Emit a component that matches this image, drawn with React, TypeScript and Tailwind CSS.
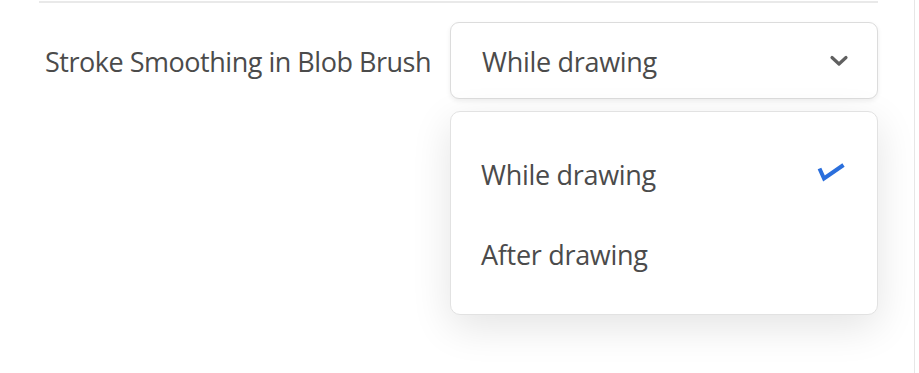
import React from "react";

export default function App() {
  const font = { fontFamily: '"Open Sans", "Noto Sans", sans-serif' };
  return (
    <div className="w-[919px] h-[373px] bg-white flex overflow-hidden" style={font}>
      <div className="w-[915px] h-full border-r border-[#e6e6e6] pl-[39px] pr-[36px]">
        <div className="h-[3px] border-b-2 border-[#e9e9e9]" />
        <div className="flex items-start pt-[19px]">
          <div className="w-[411px] pl-[6px] pt-[3px] h-[77px] flex items-center text-[27px] text-[#4b4b4b] tracking-[-0.48px]">
            Stroke Smoothing in Blob Brush
          </div>
          <div className="flex-1 flex flex-col gap-[12px]">
            <div className="h-[77px] rounded-[9px] border border-[#dcdcdc] bg-white shadow-[0_2px_5px_rgba(0,0,0,0.07)] flex items-center justify-between pl-[31px] pr-[28px]">
              <span className="text-[27px] text-[#4b4b4b] tracking-[-0.3px] pt-[4px]">While drawing</span>
              <svg width="20" height="12" viewBox="0 0 20 12" fill="none">
                <path d="M3 2.5 L10 9 L17 2.5" stroke="#606060" strokeWidth="3.2" strokeLinecap="round" strokeLinejoin="round" />
              </svg>
            </div>
            <div className="h-[204px] rounded-[10px] border border-[#e2e2e2] bg-white shadow-[0_12px_40px_rgba(0,0,0,0.11)] flex flex-col pt-[22px]">
              <div className="h-[80px] flex items-center justify-between pl-[30px] pr-[32px]">
                <span className="text-[27px] text-[#4b4b4b] tracking-[-0.3px] pt-[2px]">While drawing</span>
                <svg width="28" height="22" viewBox="0 0 28 22" fill="none" className="-mt-[4px]">
                  <path d="M2.5 7.5 L7 17.5 L26.5 4" stroke="#2b6fdc" strokeWidth="4" strokeLinecap="butt" strokeLinejoin="miter" />
                </svg>
              </div>
              <div className="h-[78px] flex items-center pl-[30px]">
                <span className="text-[27px] text-[#4b4b4b] tracking-[-0.3px] pt-[4px]">After drawing</span>
              </div>
            </div>
          </div>
        </div>
      </div>
    </div>
  );
}
